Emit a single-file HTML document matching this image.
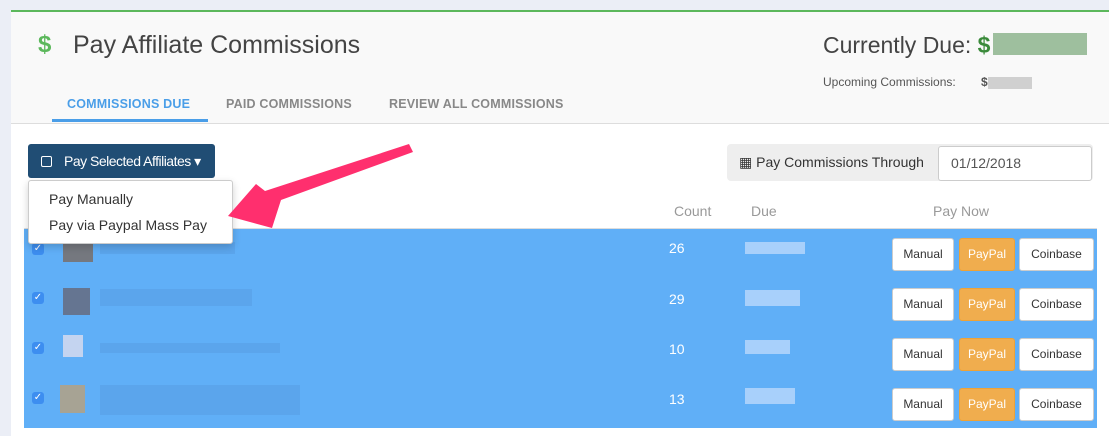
<!DOCTYPE html>
<html><head><style>
body{margin:0;width:1109px;height:434px;background:#ebeef6;font-family:"Liberation Sans",sans-serif;position:relative;overflow:hidden}
.a{position:absolute}
.card{left:11px;top:10px;width:1098px;height:424px;background:#fff;border-top:2px solid #5cb85c}
.hdr{left:11px;top:12px;width:1098px;height:111px;background:#f9f9f9;border-bottom:1px solid #ddd}
.tab{top:97px;font-size:12.5px;font-weight:bold;color:#888;letter-spacing:.2px}
.row{left:24px;width:1073px;height:50px;background:#60aff7}
.cb{left:32px;width:12px;height:12px;background:#3d8ef0;border-radius:3px;color:#fff;font-size:10px;line-height:12px;text-align:center}
.btn{height:31px;border:1px solid #ccc;border-radius:3px;background:#fff;font-size:12px;line-height:31px;text-align:center;color:#333}
.pp{background:#f0ad4e;border-color:#eea236;color:#fff}
.blur{background:#5aa2e8;opacity:.8}
</style></head><body>
<div class="a card"></div>
<div class="a hdr"></div>
<div class="a" style="left:38px;top:31px;font-size:24px;color:#5cb85c;font-weight:bold">$</div>
<div class="a" style="left:73px;top:31px;font-size:25px;color:#444">Pay Affiliate Commissions</div>
<div class="a" style="left:823px;top:32px;font-size:23px;color:#444">Currently Due: <span style="color:#3a8a3a;font-weight:bold">$</span></div>
<div class="a" style="left:993px;top:33px;width:94px;height:22px;background:#9ebf9e"></div>
<div class="a" style="left:823px;top:75px;font-size:12px;color:#555">Upcoming Commissions:</div>
<div class="a" style="left:981px;top:75px;font-size:12px;color:#555;font-weight:bold">$</div>
<div class="a" style="left:988px;top:77px;width:44px;height:12px;background:#d0d0d0"></div>
<div class="a tab" style="left:67px;color:#4a9ee8">COMMISSIONS DUE</div>
<div class="a" style="left:52px;top:119px;width:156px;height:3px;background:#4a9ee8"></div>
<div class="a tab" style="left:226px">PAID COMMISSIONS</div>
<div class="a tab" style="left:389px">REVIEW ALL COMMISSIONS</div>

<div class="a" style="left:28px;top:144px;width:187px;height:34px;background:#204d74;border-radius:3px;color:#fff;font-size:14px;line-height:34px;letter-spacing:-.5px"><span style="display:inline-block;width:9px;height:9px;border:1px solid #fff;border-radius:2px;margin:0 12px 0 13px;vertical-align:-1px"></span>Pay Selected Affiliates ▾</div>

<div class="a" style="left:727px;top:144px;width:366px;height:37px;background:#eee;border-radius:4px"></div>
<div class="a" style="left:739px;top:154px;font-size:14px;color:#333">▦ Pay Commissions Through</div>
<div class="a" style="left:938px;top:146px;width:152px;height:33px;background:#fff;border:1px solid #ccc;border-radius:3px;font-size:14px;line-height:33px;color:#555;text-indent:12px">01/12/2018</div>

<div class="a" style="left:674px;top:203px;font-size:14px;color:#999">Count</div>
<div class="a" style="left:751px;top:203px;font-size:14px;color:#999">Due</div>
<div class="a" style="left:933px;top:203px;font-size:14px;color:#999">Pay Now</div>
<div class="a" style="left:24px;top:228px;width:1073px;height:1px;background:#ddd"></div>

<div class="a row" style="top:229px"></div>
<div class="a row" style="top:279px"></div>
<div class="a row" style="top:329px"></div>
<div class="a row" style="top:379px;height:49px"></div>

<div class="a cb" style="top:243px">✓</div><div class="a cb" style="top:292px">✓</div><div class="a cb" style="top:342px">✓</div><div class="a cb" style="top:392px">✓</div>
<div class="a blur" style="left:63px;top:288px;width:27px;height:27px;background:#667"></div>
<div class="a blur" style="left:100px;top:289px;width:152px;height:17px"></div>
<div class="a blur" style="left:63px;top:335px;width:20px;height:22px;background:#dde"></div>
<div class="a blur" style="left:100px;top:343px;width:180px;height:10px"></div>
<div class="a blur" style="left:60px;top:385px;width:25px;height:28px;background:#b9a07a"></div>
<div class="a blur" style="left:100px;top:385px;width:200px;height:30px"></div>
<div class="a blur" style="left:63px;top:240px;width:30px;height:22px;background:#7a6a60"></div>
<div class="a blur" style="left:100px;top:242px;width:135px;height:12px"></div>

<div class="a" style="left:669px;top:240px;font-size:14px;color:#fff">26</div>
<div class="a" style="left:669px;top:291px;font-size:14px;color:#fff">29</div>
<div class="a" style="left:669px;top:341px;font-size:14px;color:#fff">10</div>
<div class="a" style="left:669px;top:391px;font-size:14px;color:#fff">13</div>
<div class="a" style="left:745px;top:242px;width:60px;height:12px;background:#a8d0fb"></div>
<div class="a" style="left:745px;top:290px;width:55px;height:16px;background:#a8d0fb"></div>
<div class="a" style="left:745px;top:340px;width:45px;height:14px;background:#a8d0fb"></div>
<div class="a" style="left:745px;top:388px;width:50px;height:16px;background:#a8d0fb"></div>

<div class="a btn" style="left:892px;top:238px;width:60px">Manual</div><div class="a btn pp" style="left:959px;top:238px;width:54px">PayPal</div><div class="a btn" style="left:1019px;top:238px;width:73px">Coinbase</div>
<div class="a btn" style="left:892px;top:288px;width:60px">Manual</div><div class="a btn pp" style="left:959px;top:288px;width:54px">PayPal</div><div class="a btn" style="left:1019px;top:288px;width:73px">Coinbase</div>
<div class="a btn" style="left:892px;top:338px;width:60px">Manual</div><div class="a btn pp" style="left:959px;top:338px;width:54px">PayPal</div><div class="a btn" style="left:1019px;top:338px;width:73px">Coinbase</div>
<div class="a btn" style="left:892px;top:388px;width:60px">Manual</div><div class="a btn pp" style="left:959px;top:388px;width:54px">PayPal</div><div class="a btn" style="left:1019px;top:388px;width:73px">Coinbase</div>

<div class="a" style="left:28px;top:180px;width:203px;height:62px;background:#fff;border:1px solid #ccc;border-radius:3px;box-shadow:0 3px 8px rgba(0,0,0,.18)"></div>
<div class="a" style="left:49px;top:191px;font-size:14px;color:#333">Pay Manually</div>
<div class="a" style="left:49px;top:217px;font-size:14px;color:#333">Pay via Paypal Mass Pay</div>

<svg class="a" style="left:0;top:0" width="1109" height="434"><polygon points="409,144 413,152 281,200 272,228 228,216 256,184 265,191" fill="#ff2f6e"/></svg>
</body></html>
